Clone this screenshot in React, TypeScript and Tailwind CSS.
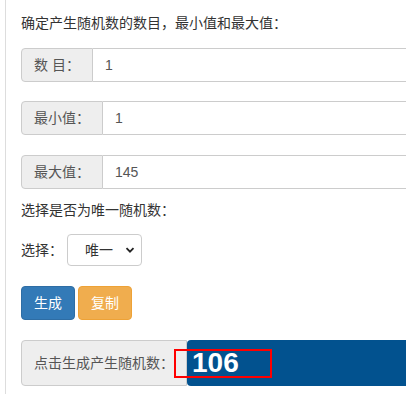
import React from 'react';

const FONT = "font-['Helvetica_Neue',Helvetica,'Liberation_Sans','Noto_Sans_CJK_SC',sans-serif]";

function InputGroup({ label, value, className = '' }: { label: string; value: string; className?: string }) {
  return (
    <div className={`flex h-[34px] w-[480px] text-[14px] ${className}`}>
      <span className="flex items-center whitespace-pre rounded-l-[4px] border border-[#ccc] bg-[#eee] px-[12px] text-[#555]">
        {label}
      </span>
      <div className="flex flex-1 items-center rounded-r-[4px] border border-l-0 border-[#ccc] bg-white px-[12px] text-[#555]">
        {value}
      </div>
    </div>
  );
}

export default function App() {
  return (
    <div className={`h-[394px] w-[406px] overflow-hidden bg-white ${FONT}`}>
      <div className="ml-[5px] h-full border-l border-[#ddd] pl-[15px] pt-[13px] text-[14px] leading-[20px] text-[#333]">
        <p>确定产生随机数的数目，最小值和最大值：</p>

        <InputGroup label="数 目：" value="1" className="mt-[15px]" />
        <InputGroup label="最小值：" value="1" className="mt-[19px]" />
        <InputGroup label="最大值：" value="145" className="mt-[20px]" />

        <p className="mt-[11px]">选择是否为唯一随机数：</p>

        {/* select row */}
        <div className="mt-[14px] flex items-center gap-[4px]">
          <span>选择：</span>
          <div className="flex h-[32px] w-[75px] items-center justify-between rounded-[4px] border border-[#ccc] bg-white pl-[17px] pr-[6px] text-[#333]">
            <span>唯一</span>
            <svg width="10" height="10" viewBox="0 0 10 10" fill="none">
              <path d="M1.5 3.2 5 6.7 8.5 3.2" stroke="#222" strokeWidth="1.8" />
            </svg>
          </div>
        </div>

        {/* buttons */}
        <div className="mt-[20px] flex gap-[3px]">
          <button className="h-[34px] w-[54px] rounded-[4px] border border-[#2e6da4] bg-[#337ab7] text-[14px] text-white">
            生成
          </button>
          <button className="h-[34px] w-[54px] rounded-[4px] border border-[#eea236] bg-[#f0ad4e] text-[14px] text-white">
            复制
          </button>
        </div>

        {/* result */}
        <div className="mt-[20px] flex h-[46px] w-[480px]">
          <span className="flex items-center rounded-l-[4px] border border-[#ccc] bg-[#eee] px-[12px] text-[#555]">
            点击生成产生随机数：
          </span>
          <div className="relative flex flex-1 items-center rounded-[4px] bg-[#02528f] pl-[5px]">
            <span className="absolute left-[-13px] top-[9px] h-[29px] w-[98px] border-2 border-[#ff0000]" />
            <span className="font-['Liberation_Sans',Arial,sans-serif] text-[28px] font-bold text-white">106</span>
          </div>
        </div>
      </div>
    </div>
  );
}
